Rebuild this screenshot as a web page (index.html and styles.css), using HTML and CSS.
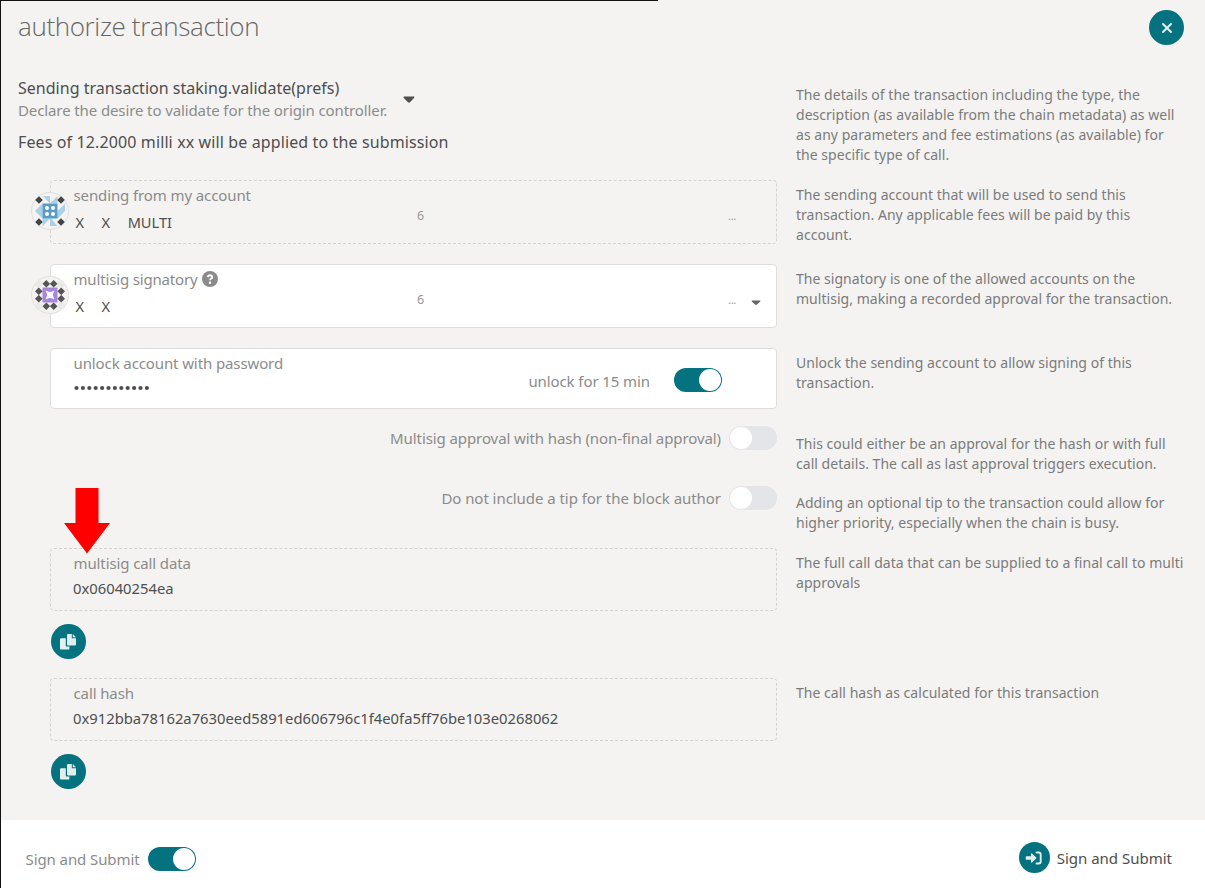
FILE: index.html
```html
<!DOCTYPE html>
<html lang="en">
<head>
<meta charset="utf-8">
<title>authorize transaction</title>
<link rel="stylesheet" href="styles.css">
</head>
<body>
<svg class="defs" width="0" height="0">
  <symbol id="copy" viewBox="0 0 18 18">
    <path fill="#e3eeee" d="M2 5.2h4.800v7.200q0 1.200 1.200 1.200h2.400v1.800q0 1.200-1.200 1.200H2.200Q1 16.600 1 15.400V6.200Q1 5.200 2 5.200z"/>
    <path fill="#e3eeee" d="M9.200 1h3.600v4.200H17v6.300q0 1.100-1.100 1.100H9.100Q8 12.600 8 11.500V2.200Q8 1 9.200 1zM13.800 1L17 4.200h-3.200z"/>
  </symbol>
</svg>
<main class="modal">
  <header class="header">
    <h1 class="title">authorize transaction</h1>
    <button class="round close" aria-label="Close"><svg width="12" height="12" viewBox="0 0 12 12"><path d="M2 2l8 8M10 2l-8 8" stroke="#e3eeee" stroke-width="2" stroke-linecap="round"/></svg></button>
  </header>

  <section class="row intro">
    <div class="summary">
      <div class="call">
        <div><div class="strong sending">Sending transaction staking.validate(prefs)</div><div class="muted declare">Declare the desire to validate for the origin controller.</div></div>
        <svg class="caret" width="12" height="8" viewBox="0 0 12 8"><path d="M.5 1.200Q.5.500 1.200.500h9.600q1.200.300.400 1.200L7 6.300q-1 .900-2 0L.800 2z" fill="#4e4e4e"/></svg>
      </div>
      <div class="strong fees">Fees of 12.2000 milli xx will be applied to the submission</div>
    </div>
    <p class="help">The details of the transaction including the type, the<br>description (as available from the chain metadata) as well<br>as any parameters and fee estimations (as available) for<br>the specific type of call.</p>
  </section>

  <section class="row account">
    <div class="field dashed">
      <label class="muted label">sending from my account</label>
      <div class="names"><span>X</span><span>X</span><span>MULTI</span></div>
      <span class="index">6</span><span class="dots">...</span>
      <svg class="identicon" width="38" height="38" viewBox="0 0 38 38">
        <circle cx="19" cy="19" r="18.500" fill="#f4f3f1" stroke="#dedede"/>
        <path fill="#a9cfe9" d="M12 4h7v7.500zM19 11.500L26.500 4v7.500zM26.500 19L34 12v7zM26.500 19h7.500l-7.500 7.500zM4 19h7.500v7.500zM11.500 11.500V19L4 19zM11.500 26.500H19L11.500 34zM19 26.500h1l6.500 7.500H19z"/>
        <path fill="#5a9cc9" d="M11.500 11.500h15v15h-15z"/>
        <g fill="#fff"><circle cx="16" cy="16" r="2"/><circle cx="22" cy="16" r="2"/><circle cx="16" cy="22" r="2"/><circle cx="22" cy="22" r="2"/></g>
        <path fill="#444" d="M8 4.200l3.800 3.800L8 11.800 4.200 8zM30 4.200l3.800 3.800-3.800 3.800L26.200 8zM8 26.200l3.800 3.800L8 33.800 4.200 30zM30 26.200l3.800 3.800-3.800 3.800-3.800-3.800z"/>
      </svg>
    </div>
    <p class="help">The sending account that will be used to send this<br>transaction. Any applicable fees will be paid by this<br>account.</p>
  </section>

  <section class="row account">
    <div class="field solid">
      <label class="muted label l-sig">multisig signatory</label>
      <div class="names"><span>X</span><span>X</span></div>
      <span class="question"><svg width="16" height="16" viewBox="0 0 16 16"><circle cx="8" cy="8" r="8" fill="#8b8b8b"/><path d="M5.800 6.200Q6 4.300 8 4.300t2.200 1.700Q10.200 7 9 7.700 8 8.300 8 9.300" fill="none" stroke="#fff" stroke-width="1.900"/><circle cx="8" cy="11.700" r="1.200" fill="#fff"/></svg></span>
      <span class="index">6</span><span class="dots">...</span>
      <svg class="select-caret" width="10" height="6" viewBox="0 0 10 6"><path d="M1 .5h8q.8.300.200 1L6 4.500q-1 .800-2 0L.800 1.500Q.300.800 1 .5z" fill="#666"/></svg>
      <svg class="identicon" width="38" height="38" viewBox="0 0 38 38">
        <circle cx="19" cy="19" r="18.500" fill="#f4f3f2" stroke="#dedede"/>
        <g fill="#e9e9e9"><circle cx="8" cy="8" r="3.500"/><circle cx="30" cy="8" r="3.500"/><circle cx="8" cy="30" r="3.500"/><circle cx="30" cy="30" r="3.500"/></g>
        <path fill="#a986dd" d="M11.500 11.500h15v15h-15z"/>
        <path fill="#fff" d="M14.500 14.500l4.500 1.800 4.500-1.800-1.800 4.500 1.800 4.500-4.500-1.800-4.500 1.800 1.800-4.500z"/>
        <path fill="#555" d="M15.300 4l3.700 3.700 3.700-3.700L26.500 7.800l-3.800 3.800L19 7.900l-3.700 3.700-3.800-3.800zM15.300 26.400l3.700 3.700 3.700-3.700 3.800 3.800-3.800 3.800-3.700-3.700-3.700 3.700-3.800-3.800zM7.800 11.500l3.800 3.800L7.900 19l3.700 3.700-3.800 3.800L4 22.700 7.700 19 4 15.300zM30.200 11.500l3.800 3.800-3.700 3.700 3.700 3.700-3.800 3.800-3.800-3.800 3.700-3.700-3.700-3.700z"/>
      </svg>
    </div>
    <p class="help">The signatory is one of the allowed accounts on the<br>multisig, making a recorded approval for the transaction.</p>
  </section>

  <section class="row password">
    <div class="field solid">
      <div class="secret"><label class="muted label">unlock account with password</label>
        <svg class="bullets" width="76" height="6"><g fill="#4e4e4e"><circle cx="2.500" cy="3" r="2.100"/><circle cx="8.900" cy="3" r="2.100"/><circle cx="15.300" cy="3" r="2.100"/><circle cx="21.700" cy="3" r="2.100"/><circle cx="28.100" cy="3" r="2.100"/><circle cx="34.500" cy="3" r="2.100"/><circle cx="40.900" cy="3" r="2.100"/><circle cx="47.300" cy="3" r="2.100"/><circle cx="53.700" cy="3" r="2.100"/><circle cx="60.100" cy="3" r="2.100"/><circle cx="66.500" cy="3" r="2.100"/><circle cx="72.900" cy="3" r="2.100"/></g></svg></div>
      <span class="muted l-unlock">unlock for 15 min</span><span class="toggle on"></span>
    </div>
    <p class="help">Unlock the sending account to allow signing of this<br>transaction.</p>
  </section>

  <section class="row option first">
    <div class="choice"><span class="muted">Multisig approval with hash (non-final approval)</span><span class="toggle"></span></div>
    <p class="help">This could either be an approval for the hash or with full<br>call details. The call as last approval triggers execution.</p>
  </section>
  <section class="row option second">
    <div class="choice"><span class="muted l-tip">Do not include a tip for the block author</span><span class="toggle"></span></div>
    <p class="help">Adding an optional tip to the transaction could allow for<br>higher priority, especially when the chain is busy.</p>
  </section>

  <section class="row output">
    <div>
      <div class="field dashed"><label class="muted label">multisig call data</label><div class="value">0x06040254ea</div></div>
      <button class="round copy" aria-label="Copy"><svg width="18" height="18"><use href="#copy"/></svg></button>
    </div>
    <p class="help">The full call data that can be supplied to a final call to multi<br>approvals</p>
    <svg class="pointer" width="46" height="66" viewBox="0 0 46 66"><path fill="#f00" d="M11.500 0h23v35H46L23 65.500 0 35h11.500z"/></svg>
  </section>
  <section class="row output last">
    <div>
      <div class="field dashed"><label class="muted label">call hash</label><div class="value">0x912bba78162a7630eed5891ed606796c1f4e0fa5ff76be103e0268062</div></div>
      <button class="round copy" aria-label="Copy"><svg width="18" height="18"><use href="#copy"/></svg></button>
    </div>
    <p class="help">The call hash as calculated for this transaction</p>
  </section>

  <footer class="footer">
    <div class="mode"><span class="muted">Sign and Submit</span><span class="toggle on"></span></div>
    <button class="submit"><span class="round"><svg width="18" height="14" viewBox="0 0 18 14"><path fill="#e3eeee" d="M1.300 5.200H6V2.700q.3-.8 1-.2l4.200 4q.4.500 0 1L7 11.500q-.7.600-1-.2V8.800H1.300Q.8 8.800.8 8.300V5.700q0-.5.500-.5z"/><path d="M11.500 1.500h2.200q2 0 2 2v7q0 2-2 2h-2.200" fill="none" stroke="#e3eeee" stroke-width="1.900" stroke-linecap="round"/></svg></span><span>Sign and Submit</span></button>
  </footer>
</main>
</body>
</html>
```

FILE: styles.css
```css
* { box-sizing: border-box; }
body { margin: 0; background: #f4f3f1; font: 15px/20px "Noto Sans", "Open Sans", sans-serif; color: #4e4e4e; }
button { border: 0; padding: 0; background: none; font: inherit; color: inherit; }
.defs { position: absolute; }
.modal { position: relative; width: 1205px; height: 888px; border-left: 1px solid #111; overflow: hidden; display: flex; flex-direction: column; }
.modal::before { content: ""; position: absolute; top: 0; left: 0; width: 657px; height: 1px; background: #111; }
.header { height: 80px; flex: none; display: flex; justify-content: space-between; align-items: flex-start; padding: 10px 21px 0 17px; }
.title { margin: 0; font: 300 26px/32px "Open Sans", sans-serif; letter-spacing: -.36px; color: #666; white-space: nowrap; }
.round { display: flex; align-items: center; justify-content: center; width: 35px; height: 35px; border-radius: 50%; background: #04737f; }
.row { position: relative; display: grid; grid-template-columns: 727px 1fr; column-gap: 19px; align-items: start; padding-left: 49px; flex: none; white-space: nowrap; }
.help { margin: 0; padding-top: 5px; font-size: 14px; letter-spacing: .03px; line-height: 20px; color: #7b7b7b; }
.muted { color: #8b8b8b; letter-spacing: -.09px; }
.strong { font-size: 16px; letter-spacing: .02px; }
.intro { height: 100px; }
.summary { margin-left: -32px; }
.call { display: flex; align-items: center; gap: 16px; height: 40px; line-height: 22px; }
.call > div { margin-top: -2px; }
.declare { font-size: 15px; letter-spacing: -.11px; }
.fees { line-height: 24px; margin-top: 10px; letter-spacing: .12px; }
.field { position: relative; height: 64px; border-radius: 4px; padding: 3px 23px 0 22.500px; }
.dashed { border: 1px dashed #d2d2d1; }
.solid { background: #fff; border: 1px solid #dededf; }
.label { display: block; line-height: 22px; letter-spacing: -.11px; }
.l-sig { letter-spacing: -.16px; }
.l-tip { letter-spacing: -.05px; }
.account { height: 84px; }
.names { display: flex; gap: 17.500px; margin: 5px 0 0 2px; line-height: 22px; font-size: 14.600px; }
.identicon { position: absolute; left: -20px; top: 11px; }
.index, .dots, .question, .select-caret { position: absolute; }
.index { left: 366px; top: 25px; font-size: 12.500px; color: #999; }
.dots { left: 677px; top: 25px; font-size: 11px; letter-spacing: -.3px; color: #999; }
.question { left: 150.500px; top: 6px; line-height: 0; }
.select-caret { left: 700px; top: 35px; }
.password { height: 76px; }
.password .field { height: 61px; display: flex; padding-right: 54px; }
.secret { flex: 1; }
.bullets { display: block; margin-top: 11px; }
.l-unlock { margin: 19px 24px 0 0; }
.toggle { display: block; flex: none; position: relative; width: 48px; height: 24px; border-radius: 12px; background: #e3e5e8; }
.toggle::after { content: ""; position: absolute; left: 1px; top: 1px; width: 22px; height: 22px; border-radius: 50%; background: #fff; }
.toggle.on { background: #04737f; }
.toggle.on::after { left: 25px; }
.password .toggle { margin-top: 16px; }
.choice { display: flex; justify-content: flex-end; gap: 8px; align-items: center; padding-top: 2px; }
.option { height: 60px; }
.option.second { height: 64px; }
.first .help { padding-top: 10px; }
.second .help { padding-top: 9px; }
.output { height: 130px; }
.output .field { height: 63px; }
.value { margin: 3px 0 0 -.5px; line-height: 22px; font-size: 14.800px; letter-spacing: -.01px; }
.copy { margin: 13px 0 0 .5px; }
.pointer { position: absolute; left: 62.500px; top: -60px; }
.output.last { height: 142px; }
.footer { height: 68px; background: #fff; display: flex; justify-content: space-between; align-items: flex-start; padding: 22px 33px 0 24.500px; white-space: nowrap; }
.mode { display: flex; align-items: center; gap: 8.500px; margin-top: 5px; }
.submit { display: flex; align-items: center; gap: 7px; }
.submit .round { width: 31px; height: 31px; }
```
